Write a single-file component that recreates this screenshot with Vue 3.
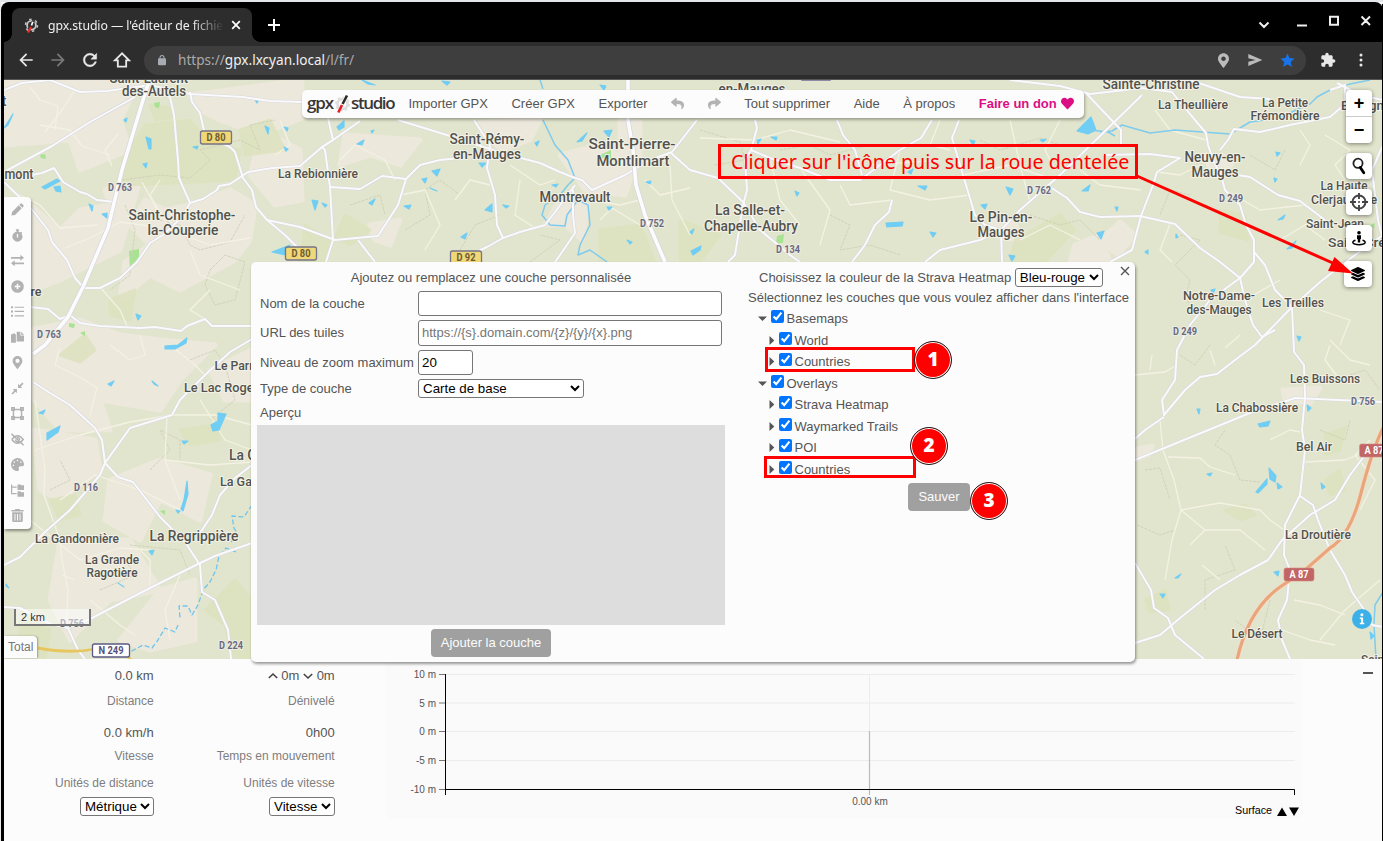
<script setup>
const p = s => 'M' + s.trim().split(/\s+/).join('L')

const roads = [
  '4,90 22,83 50,80 80,92 107,91 150,85 190,94 243,97 270,101 302,102',
  '135,97 90,122 52,146 4,172',
  '160,92 170,97 174,115 178,160 179,178 190,203',
  '190,92 192,102 200,113 205,135 230,147 235,152 243,178 252,190 256,207 267,220 285,235 300,250',
  '190,203 203,199 217,190 219,186 230,184 248,172 272,168 300,166 322,147 333,140 360,121',
  '190,203 181,218 163,235 150,243 137,262 120,278 100,288 83,288',
  '32,175 42,173 54,168 63,182 80,192 87,194 97,200 115,202',
  '4,182 30,207 48,230 52,242 67,260 75,278 83,287',
  '30,307 48,309 60,319 70,315 80,323 100,326 140,328 155,327 181,331 187,326 205,319 212,326 252,326',
  '267,220 300,227 335,240 378,236 398,205 406,179 420,165 440,160 460,158',
  '328,118 333,140 322,147 325,150 330,187 333,240 326,262',
  '330,187 360,189 382,176 406,179', '358,240 375,262',
  '398,120 450,136 505,154 540,163 560,172 575,178 582,180 592,190 625,175 650,160 672,152 697,120',
  '474,120 490,145 487,168 495,195 497,225 503,238 487,247 455,262',
  '503,238 520,232 545,225 555,212 575,185',
  '573,190 573,215 575,233 560,255 555,262',
  '671,153 690,170 718,178 743,202 760,230 790,255 800,262',
  '755,120 757,128 751,150 770,158 800,168 830,180 860,180 900,150 921,138 932,120',
  '751,150 745,160 747,190 743,205 735,255 728,262',
  '837,120 843,135 855,150 862,175',
  '959,120 952,138 963,175 975,215 985,225 1001,230 1002,262',
  '892,200 889,212 875,225 865,245 852,262',
  '1142,95 1060,175 1020,210 1001,230 980,240 940,250 925,262',
  '1047,185 1067,198 1080,212 1100,217 1140,216 1175,224 1200,248 1220,262 1240,278 1245,300 1253,325 1262,337 1275,330',
  '1085,92 1102,110 1121,130 1121,145',
  '1010,80 1060,86 1090,94 1142,88 1172,92 1180,102 1195,120 1206,133 1208,145 1215,165 1220,172 1225,190 1240,205 1246,225 1254,240 1254,262 1240,278 1210,300 1190,325 1177,350 1175,380 1162,400 1164,415 1185,390 1200,377 1217,374 1235,360 1255,345 1292,307',
  '1190,80 1240,97 1270,99', '1220,150 1228,140 1234,129 1260,132 1290,125 1330,117 1345,104 1345,85 1330,90',
  '1103,155 1150,154 1180,158 1157,172 1153,185 1141,216 1132,250 1110,262',
  '1225,173 1250,177 1278,195 1300,201 1325,220',
  '1254,252 1265,265 1275,290 1292,307 1320,282 1355,255 1383,235',
  '1292,307 1294,352 1304,365 1305,397 1302,430 1305,450 1300,495 1285,525 1284,555 1290,570 1287,600 1278,620 1282,640 1290,659',
  '1164,417 1145,430 1135,439', '1135,460 1250,413 1295,398 1383,402',
  '1300,496 1313,505 1318,520 1330,550 1345,575 1352,592 1363,608 1372,625',
  '1365,455 1350,475 1335,500 1310,515 1282,540 1268,560 1240,575 1215,590 1180,618 1160,635 1135,643',
  '1135,563 1151,590 1154,608 1168,618 1175,635 1204,659',
  '33,382 50,393 70,405 95,428 102,440 105,463 118,477 133,482 160,517 185,542 200,565 202,592 215,600 228,630 231,659',
  '4,565 20,557 45,532 70,510 100,475 105,463 130,428 172,415 180,400 205,375 230,352 252,339',
  '200,533 212,515 220,495 235,478 252,465',
  '4,607 20,608 50,624 68,628 78,650 85,659', '68,628 90,619 150,588 196,565 215,556 252,543',
  '1372,625 1383,627', '1337,83 1360,95 1383,100', '1383,145 1372,170 1378,220 1383,240'
].map(p)
const mainRoads = [
  '150,80 147,87 140,110 122,170 108,228 83,287 68,317 45,345 33,354',
  '628,80 628,120 633,150 636,185 645,215 665,262'
].map(p)
const lanes = [
  '30,87 40,100 58,106 55,130', '75,90 62,110 45,132', '40,125 70,130 82,146 110,155', '118,134 105,150 112,166',
  '65,248 90,238 120,222 150,226', '10,190 40,205 60,228 98,225', '100,287 120,310 127,326', '160,180 150,195 170,230 210,245 250,238',
  '190,250 200,275 240,290', '142,182 160,215 175,225', '210,290 190,310 205,319', '35,450 80,435 130,422 172,415 215,415 252,425',
  '60,348 55,365 85,380 97,388 90,415', '35,400 45,470 44,495 60,540 62,560', '110,345 130,360 145,355 140,335', '170,345 195,365 205,375',
  '60,500 95,475 140,490 185,512', '167,415 165,460 180,500', '200,400 225,440 252,450', '165,460 210,465 252,462', '30,520 80,560 120,548 150,550',
  '62,560 68,590 66,628', '62,575 75,580', '90,600 120,625 135,635', '150,588 150,560 140,550', '180,575 165,610 170,640',
  '280,120 290,145 275,155', '340,160 355,145 385,160 395,180', '400,195 425,190 440,225 425,250', '455,200 470,180 490,185',
  '510,165 540,185 555,180', '520,180 515,215 535,228', '590,200 620,205 640,200', '600,220 612,208 640,225', '645,180 660,195 690,188',
  '670,165 672,200 690,235', '700,138 755,140 790,130 840,142', '770,158 780,200 800,225', '840,185 850,205 892,200', '800,168 830,210 820,245',
  '870,165 940,160', '900,150 890,190 930,200 970,195', '940,120 930,145 950,150', '963,175 1010,165 1055,180', '1010,120 1020,165 1030,202',
  '1060,120 1045,150 1055,170', '1080,170 1100,185 1141,190', '1020,240 1050,225 1080,240', '1155,110 1170,130 1206,140',
  '1157,172 1180,175 1200,165', '1170,224 1160,250 1172,262', '1225,190 1260,210 1305,205', '1300,130 1310,145 1300,165', '1325,135 1350,150 1335,165 1345,180',
  '1280,240 1305,225 1325,240', '1245,300 1280,280', '1320,310 1350,320 1340,345', '1330,340 1350,360 1370,365',
  '1135,375 1165,372 1177,365', '1152,355 1150,370', '1160,420 1163,450 1174,480 1181,510 1172,540 1165,580', '1168,457 1200,458 1210,467 1235,475',
  '1181,510 1220,503 1260,510 1270,520 1284,530', '1181,510 1205,530 1240,530 1265,550', '1270,440 1290,430 1300,432', '1305,462 1345,460 1365,452',
  '1205,530 1190,545', '1202,565 1220,580', '1294,600 1320,605 1345,615', '1380,580 1345,610 1320,640', '1282,630 1310,640 1335,645',
  '1370,440 1355,455 1375,480 1360,510', '1330,345 1325,360 1340,380', '1210,350 1215,365', '1240,335 1225,348'
].map(p)
const contours = [
  '122,180 160,175 190,178 210,160 200,150 240,140 260,150 250,125 275,120', '140,215 180,225 190,245 200,250 230,242 245,215', '125,205 135,230 130,275 110,290',
  '210,270 225,255 245,262 235,300 215,305 205,285 210,270', '405,230 430,215 425,190 440,180 460,195', '350,205 380,195 385,215', '460,250 475,225 500,215',
  '530,262 560,240 540,235', '700,130 740,142 745,160 715,165', '780,150 810,145 830,155 870,145', '830,215 850,225 840,250 870,245 900,255',
  '980,140 1000,150 1040,138 1060,145', '1030,215 1060,225 1080,220 1100,240', '1180,235 1200,240 1175,265 1190,280 1185,300 1200,310', '1285,150 1275,170 1250,155',
  '1190,195 1170,190 1160,215', '1210,345 1195,365 1180,355', '1145,470 1160,468 1170,500', '1225,430 1215,445 1230,455 1240,480 1260,482', '1137,525 1160,535 1175,530',
  '1205,610 1205,580 1235,570 1225,545', '1320,430 1345,440 1350,420', '1335,380 1365,370 1380,390', '1270,600 1260,640 1235,620', '150,470 170,450 160,430 180,440 180,460',
  '190,360 215,350 225,365 235,400 210,420', '50,490 70,480 60,460', '130,545 180,550 190,575', '100,590 135,575 125,560'
].map(p)
const tans = [
  'M4 80L140 80 120 120 130 150 80 170 70 140 4 145Z', 'M190 95L302 80 302 118 260 135 220 120 200 110Z', 'M4 200L30 205 60 230 80 210 110 205 105 190 140 180 120 250 60 280 34 290Z',
  'M145 200L165 210 190 205 230 190 255 205 250 240 235 260 180 290 150 275 120 300 125 262 150 245 130 225Z', 'M262 130L300 150 302 200 275 205 250 175Z',
  'M30 330L80 320 120 335 160 340 215 345 180 380 160 410 100 400 110 430 60 430 34 400Z', 'M34 430L95 440 100 470 60 500 40 490Z', 'M110 480L160 460 210 475 200 520 160 500 140 540 105 520Z',
  'M60 540L130 540 160 590 110 600 70 640 50 600Z', 'M160 590L195 580 195 640 150 650 120 640Z', 'M210 370L252 350 252 400 225 400Z', 'M345 135L420 140 400 165 370 155 340 165Z', 'M480 122L540 120 530 140 500 150Z',
  'M560 155L600 145 635 165 625 195 585 190Z', 'M560 200L588 205 582 240 565 225 545 225Z', 'M370 225L400 220 390 245 375 240Z', 'M1100 240L1120 222 1135 235 1118 255Z', 'M990 220L1015 222 1020 240 1000 238Z',
  'M1283 390L1320 388 1310 403 1285 400Z', 'M1205 155L1235 158 1225 175 1210 170Z', 'M1135 450L1152 446 1148 455 1135 460Z', 'M620 120L640 122 640 160 620 155Z', 'M1075 245L1100 235 1110 262 1070 262Z'
]
const greens = [
  'M145 125L190 120 205 138 240 150 235 180 180 183 125 185 122 160Z', 'M150 105L170 108 172 118 155 120Z', 'M240 130L270 120 285 150 245 155Z', 'M60 355L85 335 95 350 80 362Z',
  'M50 500L75 495 80 515 60 520Z', 'M110 300L135 290 130 320 110 315Z', 'M345 215L370 230 350 245 335 238Z', 'M305 225L330 240 325 262 300 262Z', 'M680 220L720 235 700 262 680 262Z',
  'M1015 240L1060 215 1075 230 1045 262 1010 262Z', 'M1220 210L1245 215 1248 240 1220 232Z', 'M1325 435L1345 428 1340 450 1325 455Z', 'M1325 480L1340 470 1345 490 1330 495Z',
  'M1225 510L1245 505 1255 515 1240 520Z', 'M1145 600L1165 590 1170 610 1150 612Z', 'M205 610L235 580 252 600 252 659 235 659 225 625Z', 'M180 430L215 425 220 440 190 445Z', 'M20 620L50 630 45 659 20 645Z',
  'M600 230L640 225 655 262 600 262Z', 'M460 140L475 135 480 150Z'
]
const parks = ['M129 251L139 249 139 260 130 270Z', 'M154 103L160 102 159 108 155 107Z', 'M40 155L45 154 46 159 41 158Z', 'M600 155L611 150 611 160 602 158Z', 'M777 236L784 234 783 243 776 243Z', 'M160 511L165 510 165 515Z', 'M69 323L75 324 74 328 69 327Z', 'M1370 225L1375 223 1374 229Z', 'M80 333L85 331 85 336Z']
const waters = [
  'M4 128L13 114 8 125Z', 'M146 137L151 139 151 149 149 149Z', 'M42 187L57 179 60 181 45 189Z', 'M54 187L60 186 61 192 56 191Z', 'M89 204L93 206 92 211Z', 'M102 214L107 213 107 218Z', 'M143 164L147 163 146 168Z',
  'M193 147L198 146 197 149Z', 'M265 126L269 128 268 134Z', 'M254 98L259 99 257 103Z', 'M124 120L127 118 126 122Z', 'M284 127L288 128 287 131Z', 'M284 147L288 149 286 151Z', 'M136 314L141 316 138 320Z', 'M165 346L178 345 187 338 186 343 175 349 165 349Z',
  'M47 433L60 426 58 432 47 440Z', 'M39 413L45 410 43 414Z', 'M108 384L114 381 111 386Z', 'M152 381L158 386 154 384Z', 'M211 425L218 421 218 413 226 414 219 430 213 431Z', 'M182 441L188 441 184 444Z', 'M187 481L188 494 183 511 181 509 184 500Z', 'M176 510L180 511 178 513Z',
  'M149 551L154 550 152 555Z', 'M118 583L124 587Z', 'M272 252L290 245 285 255Z', 'M337 127L344 121 344 127 339 130Z', 'M357 144L364 140 362 145Z', 'M371 131L374 130 372 133Z', 'M432 171L440 169 437 176Z', 'M422 179L427 178 425 183Z', 'M430 188L437 191 434 190Z',
  'M479 163L486 163 482 167Z', 'M485 210L492 204 492 212Z', 'M503 205L509 206 506 208Z', 'M369 203L375 199 372 205Z', 'M404 206L411 205 409 209Z', 'M312 200L318 201 315 210Z', 'M322 203L327 205 325 207Z', 'M461 237L467 233 465 239Z', 'M604 131L612 130 609 137Z', 'M577 142L587 133 582 141Z',
  'M535 143L539 141 537 146Z', 'M552 185L558 184 556 187Z', 'M607 207L612 207 609 210Z', 'M691 251L701 246 700 250 693 255Z', 'M646 182L651 181 650 184Z', 'M627 240L632 242 630 244Z', 'M690 232L694 229 692 234Z', 'M1077 131L1091 117 1096 130 1088 134Z', 'M918 186L927 186 925 190Z', 'M886 223L903 222 902 226 887 227Z',
  'M1006 187L1013 189 1010 195Z', 'M1082 191L1090 185 1088 191Z', 'M930 232L936 233 933 237Z', 'M981 205L987 204 985 209Z', 'M1009 255L1015 256 1012 261Z', 'M771 137L777 137 776 140Z', 'M757 140L761 139 758 144Z', 'M908 172L913 169 911 174Z', 'M1040 140L1046 139 1043 142Z', 'M970 140L975 141 973 145Z', 'M795 191L799 193 797 196Z', 'M1097 233L1104 231 1101 239Z',
  'M1258 424L1270 421 1268 426 1260 427Z', 'M1269 468L1276 476 1275 482 1270 479Z', 'M1256 492L1267 479 1267 484 1258 493Z', 'M1277 483L1282 487 1278 489Z', 'M1321 483L1325 487 1322 489Z', 'M1207 474L1212 473 1210 476Z', 'M1160 594L1165 594 1163 598Z', 'M1175 578L1181 574 1178 578Z', 'M1274 572L1279 571 1278 576Z', 'M1197 409L1200 409 1199 414Z', 'M1347 401L1360 401 1359 403Z', 'M1370 632L1374 636 1371 639Z',
  'M1276 152L1280 153 1277 156Z', 'M1274 178L1277 179 1275 182Z', 'M1278 220L1285 215 1283 219Z', 'M1287 249L1296 241 1292 248Z', 'M1115 207L1118 207 1117 211Z', 'M1297 336L1301 337 1299 341Z', 'M1307 405L1311 408 1308 411Z', 'M1176 234L1178 237 1176 238Z', 'M1145 252L1148 250 1148 254Z', 'M1211 290L1215 289 1213 294Z', 'M442 81L450 82 447 85Z', 'M600 85L606 86 604 90Z', 'M362 80L375 85 368 84Z', 'M6 584L9 588 6 586Z'
]
const rivers = [
  '543,120 555,145 568,160 575,178 568,185 560,195 545,205 542,215 550,225 565,226 567,215 578,200 588,205 590,225 580,245 578,255 590,250 607,262',
  '1100,132 1112,131 1122,125 1150,133 1175,130 1230,134 1250,122 1280,118 1300,108 1310,104 1317,97 1330,90 1350,84 1370,80',
  '1383,592 1375,605 1374,625 1376,659', '540,80 543,89', '1090,130 1108,132 1115,136'
].map(p)
const streams = ['252,505 244,517 232,516 234,528 238,535 231,542', '236,552 226,548 219,556 216,570 210,582 203,590 198,605 192,615 188,606 179,606 180,618', '178,625 175,632 165,628 158,640 152,648 143,645 130,652'].map(p)

const places = [
  ['Saint-Laurent-', 151, 83, 83, 15], ['des-Autels', 154, 96, 64, 14], ['mont', 19, 179, 29, 14], ['t', 4, 106, 5, 14], ['re', 36, 296, 11, 13],
  ['La Rebionnière', 318, 178, 80, 13], ['Saint-Christophe-', 182, 220, 107, 14], ['la-Couperie', 183, 235, 71, 14],
  ['Saint-Rémy-', 487, 144, 75, 14], ['en-Mauges', 487, 159, 68, 14], ['Saint-Pierre-', 632, 149, 87, 15], ['Montlimart', 633, 166, 73, 15],
  ['Montrevault', 575, 202, 71, 14], ['en-Mauges', 752, 94, 67, 14], ['La Salle-et-', 750, 215, 70, 14], ['Chapelle-Aubry', 751, 231, 94, 14],
  ['Le Pin-en-', 1001, 222, 63, 14], ['Mauges', 1001, 237, 47, 14], ['Sainte-Christine', 1151, 89, 97, 14], ['La Theullière', 1193, 109, 70, 13],
  ['La Petite', 1285, 107, 46, 13], ['Frémondière', 1285, 120, 69, 13], ['Neuvy-en-', 1215, 162, 61, 14], ['Mauges', 1215, 177, 47, 14],
  ['La Haute', 1344, 190, 47, 13], ['Clerjaudière', 1344, 204, 66, 13], ['Saint-Jean', 1335, 228, 58, 13], ['Saint-Crézin', 1366, 247, 76, 13],
  ['Bourgna', 1366, 110, 50, 13], ['Notre-Dame-', 1219, 300, 72, 13], ['des-Mauges', 1219, 314, 65, 13], ['Les Treilles', 1293, 307, 62, 13],
  ['Le Parmont', 246, 370, 63, 13], ['Le Lac Rogerie', 226, 392, 84, 13], ['La Giraudière', 270, 460, 82, 14], ['La Gazonnière', 260, 486, 80, 13],
  ['Les Buissons', 1325, 383, 70, 13], ['La Chabossière', 1257, 412, 82, 13], ['Bel Air', 1314, 451, 36, 13],
  ['La Gandonnière', 77, 543, 84, 13], ['La Regrippière', 194, 541, 89, 15], ['La Grande', 112, 564, 54, 13], ['Ragotière', 112, 577, 51, 13],
  ['La Droutière', 1318, 539, 66, 13], ['Le Désert', 1257, 638, 51, 13], ['Saint-Quentin', 1397, 664, 72, 13]
]
const roadNames = [
  ['D 763', 120, 191], ['D 763', 49, 338], ['D 752', 652, 227], ['D 134', 788, 253], ['D 762', 1039, 194], ['D 249', 1231, 202], ['D 249', 1185, 335],
  ['D 756', 1363, 405], ['D 116', 86, 491], ['D 756', 72, 627], ['D 224', 231, 649]
]
const shields = [
  ['D 80', 216, 137.5, 31, 'yellow'], ['D 80', 301, 253.5, 31, 'yellow'], ['D 92', 466, 257.5, 31, 'yellow'],
  ['N 249', 111, 650.5, 37, 'white'], ['A 87', 1374, 450.5, 29, 'red'], ['A 87', 1299, 574.5, 30, 'red']
]
const nav = ['Tout supprimer', 'Aide', 'À propos']
const share = 'M503.691 189.836L327.687 37.851C312.281 24.546 288 35.347 288 56.015v80.053C127.371 137.907 0 170.1 0 322.326c0 61.441 39.581 122.309 83.333 154.132 13.653 9.931 33.111-2.533 28.077-18.631C66.066 312.814 132.917 274.316 288 272.085V360c0 20.7 24.3 31.453 39.687 18.164l176.004-152c11.071-9.562 11.086-26.753 0-36.328z'
const heart = 'M462.3 62.6C407.5 15.9 326 24.3 275.7 76.2L256 96.5l-19.7-20.3C186.1 24.3 104.5 15.9 49.7 62.6c-62.8 53.6-66.1 149.8-9.9 207.9l193.5 199.8c12.5 12.9 32.8 12.9 45.3 0l193.5-199.8c56.3-58.1 53-154.3-9.8-207.9z'
const layers = 'M12.41 148.02l232.94 105.67c6.8 3.09 14.49 3.09 21.29 0l232.94-105.67c16.55-7.51 16.55-32.52 0-40.03L266.65 2.31a25.607 25.607 0 0 0-21.29 0L12.41 107.98c-16.55 7.51-16.55 32.53 0 40.04zm487.18 88.28l-58.09-26.33-161.64 73.27c-7.56 3.43-15.59 5.17-23.86 5.17s-16.29-1.74-23.86-5.17L70.51 209.97l-58.1 26.33c-16.55 7.5-16.55 32.5 0 40l232.94 105.59c6.8 3.08 14.49 3.08 21.29 0L499.59 276.3c16.55-7.5 16.55-32.5 0-40zm0 127.8l-57.87-26.23-161.86 73.37c-7.56 3.43-15.59 5.17-23.86 5.17s-16.29-1.74-23.86-5.17L70.29 337.87 12.41 364.1c-16.55 7.5-16.55 32.5 0 40l232.94 105.59c6.8 3.08 14.49 3.08 21.29 0L499.59 404.1c16.55-7.5 16.55-32.5 0-40z'
const pin = 'M172.268 501.67C26.97 291.031 0 269.413 0 192 0 85.961 85.961 0 192 0s192 85.961 192 192c0 77.413-26.97 99.031-172.268 309.67-9.535 13.774-29.93 13.773-39.464 0zM192 272c44.183 0 80-35.817 80-80s-35.817-80-80-80-80 35.817-80 80 35.817 80 80 80z'
/* Tool glyphs are drawn on a 16-unit grid; "f" is filled, "s" is stroked. */
const tools = [
  { f: 'M.5 15.500l.8-4.500L9.500 2.800l3.700 3.700L5 14.700zM10.300 2l1.200-1.200q1-.8 2 0l1.700 1.700q.8 1 0 2L14 5.700z' },
  { f: 'M6 .2h4v1.900H9.200v1.200a6.200 6.200 0 0 1 2.400 1.100l1-1 1.300 1.300-1 1A6.200 6.200 0 1 1 6.800 3.300V2.100H6zM7.200 6v4.500h1.600V6z' },
  { f: 'M11.500 1L16 4.700l-4.500 3.600V5.800H0V3.700h11.500zM4.500 7.800L0 11.400l4.500 3.600v-2.500H16v-2.100H4.500z' },
  { f: 'M8 .2a7.800 7.800 0 1 0 0 15.600A7.800 7.800 0 0 0 8 .2zM7 4.500h2V7h2.500v2H9v2.500H7V9H4.500V7H7z' },
  { f: 'M0 1.500h2.500V4H0zM0 6.700h2.500v2.500H0zM0 12h2.500v2.500H0zM4.500 2H16v1.500H4.500zM4.500 7.200H16v1.500H4.500zM4.500 12.500H16V14H4.500z' },
  { f: 'M0 4h2V3h3v1h1v10.500H0zM7 1h4.500v4.500H16V13H7zM12.500 1L16 4.500h-3.500z' },
  { big: pin },
  { f: 'M8.700 7.300V2.200l1.800 1.800L14 .5 15.500 2 12 5.500l1.800 1.800zM7.300 8.700v5.100L5.500 12 2 15.500.5 14 4 10.500 2.200 8.700z' },
  { s: 'M3 3h10v10H3zM1 1h3v3H1zM12 1h3v3h-3zM1 12h3v3H1zM12 12h3v3h-3z' },
  { s: 'M1 8q7-9 14 0Q8 17 1 8M.5 1L15.500 15M5.500 8a2.700 2.700 0 0 0 4 2.300M7.500 5.500A2.600 2.600 0 0 1 10.500 8.500' },
  { big: 'M204.3 5C104.9 24.4 24.8 104.3 5.2 203.4c-37 187 131.7 326.4 258.8 306.7 41.2-6.4 61.4-54.6 42.5-91.7-23.1-45.4 9.9-98.4 60.9-98.4h79.7c35.8 0 64.8-29.6 64.9-65.3C511.5 97.1 368.1-26.9 204.3 5zM96 320c-17.7 0-32-14.3-32-32s14.3-32 32-32 32 14.3 32 32-14.3 32-32 32zm32-128c-17.7 0-32-14.3-32-32s14.3-32 32-32 32 14.3 32 32-14.3 32-32 32zm128-64c-17.7 0-32-14.3-32-32s14.3-32 32-32 32 14.3 32 32-14.3 32-32 32zm128 64c-17.7 0-32-14.3-32-32s14.3-32 32-32 32 14.3 32 32-14.3 32-32 32z', square: true },
  { f: 'M0 .5h1.500V3H7v1.500H1.500V11H7v1.500H0zM8 .6h3.500l1 1H16v5.700H8zM8 9h3.500l1 1H16v5.700H8z' },
  { f: 'M5.500 0h5l.7 1.300H15.500V3H.5V1.300h4.300zM1.500 4h13v10.500q0 1.500-1.500 1.500H3q-1.500 0-1.500-1.500zM4.300 6v8h1.200V6zM7.400 6v8h1.200V6zM10.500 6v8h1.200V6z' }
]
const tree = [
  ['Basemaps', 0], ['World', 1], ['Countries', 1], ['Overlays', 0], ['Strava Heatmap', 1], ['Waymarked Trails', 1], ['POI', 1], ['Countries', 1]
]
const ticks = [['10 m', 674.5], ['5 m', 703], ['0 m', 731.5], ['-5 m', 760.5], ['-10 m', 789.5]]
</script>

<template>
  <div class="window">
    <header class="tabs">
      <div class="tab">
        <svg class="fav" viewBox="0 0 14 14"><circle cx="7" cy="6.800" r="4.100" fill="none" stroke="#c9c9c9" stroke-width="1.700" /><circle cx="7" cy="6.800" r="5.600" fill="none" stroke="#c9c9c9" stroke-width="1.400" stroke-dasharray="2.300 3.560" /><path d="M9 2.500L4.500 11" stroke="#2b2b2b" stroke-width="2.800" /><path d="M8.200 3.500L7 7" stroke="#fff" stroke-width="1.600" /><path d="M6.500 8.500L3.800 13.600" stroke="#f02b2b" stroke-width="2" /></svg>
        <span class="title">gpx.studio — l'éditeur de fichiers</span>
        <svg class="x" viewBox="0 0 10 10"><path d="M1.200 1.200l7.600 7.600M8.800 1.200L1.200 8.800" /></svg>
      </div>
      <svg class="plus" viewBox="0 0 12 12"><path d="M6 0v12M0 6h12" /></svg>
      <svg class="controls" viewBox="0 0 116 20"><path d="M3.500 12.500l4.500 4.500 4.500-4.500M41 15.500h10M74 6.800h8v8h-8zM105.500 6.500l8.500 8.500M114 6.500l-8.500 8.500" /></svg>
    </header>
    <div class="addressbar">
      <svg viewBox="0 0 24 24"><path d="M20 11H7.830l5.590-5.590L12 4l-8 8 8 8 1.410-1.410L7.830 13H20z" /></svg>
      <svg class="dim" viewBox="0 0 24 24"><path d="M12 4l-1.410 1.410L16.170 11H4v2h12.170l-5.580 5.590L12 20l8-8z" /></svg>
      <svg viewBox="0 0 24 24"><path d="M17.650 6.350C16.200 4.900 14.210 4 12 4c-4.420 0-7.990 3.580-7.990 8s3.570 8 7.990 8c3.730 0 6.840-2.550 7.730-6h-2.080c-.82 2.330-3.040 4-5.650 4-3.310 0-6-2.690-6-6s2.690-6 6-6c1.660 0 3.140.69 4.220 1.780L13 11h7V4z" stroke="#e8e8e8" stroke-width=".5" /></svg>
      <svg viewBox="0 0 24 24"><path d="M12 4L3.500 12.500H7V20h10v-7.500h3.500z" fill="none" stroke="#e8e8e8" stroke-width="2.200" /></svg>
      <div class="url">
        <svg class="lock" viewBox="0 0 16 21"><path d="M14 7h-1V5.500a5 5 0 0 0-10 0V7H2q-2 0-2 2v10q0 2 2 2h12q2 0 2-2V9q0-2-2-2zM5 7V5.500a3 3 0 0 1 6 0V7z" /></svg>
        <span class="address"><i>https://</i>gpx.lxcyan.local<i>/l/fr/</i></span>
        <svg class="a" viewBox="0 0 384 512"><path :d="pin" /></svg>
        <svg class="b" viewBox="0 0 24 24"><path d="M2 21L23 12 2 3v6.500L13 12 2 14.500z" /></svg>
        <svg class="c" viewBox="0 0 24 24"><path d="M12 17.270L18.180 21l-1.640-7.030L22 9.240l-7.190-.61L12 2 9.190 8.630 2 9.240l5.460 4.730L5.820 21z" /></svg>
      </div>
      <svg class="ext" viewBox="0 0 24 24"><path d="M20.500 11H19V7c0-1.100-.9-2-2-2h-4V3.500C13 2.120 11.880 1 10.500 1S8 2.120 8 3.500V5H4c-1.100 0-1.990.9-1.990 2v3.800H3.500c1.490 0 2.700 1.210 2.700 2.700s-1.210 2.700-2.700 2.700H2V20c0 1.100.9 2 2 2h3.800v-1.500c0-1.490 1.210-2.700 2.700-2.700 1.490 0 2.700 1.210 2.700 2.700V22H17c1.100 0 2-.9 2-2v-4h1.500c1.380 0 2.500-1.120 2.500-2.500S21.880 11 20.500 11z" /></svg>
      <svg class="dots" viewBox="0 0 4 14"><circle cx="2" cy="2" r="1.500" /><circle cx="2" cy="7" r="1.500" /><circle cx="2" cy="12" r="1.500" /></svg>
    </div>

    <main class="map">
      <svg class="canvas" viewBox="4 80 1379 579">
        <rect x="4" y="80" width="1379" height="579" fill="#e2e5cd" />
        <g fill="#ece8dc" stroke="#ece8dc" stroke-width="5" stroke-linejoin="round"><path v-for="d in tans" :key="d" :d="d" /></g>
        <g fill="#dde3be" opacity=".8" stroke="#dde3be" stroke-width="3" stroke-linejoin="round"><path v-for="d in greens" :key="d" :d="d" /></g>
        <path v-for="d in parks" :key="d" :d="d" fill="#a8e293" />
        <path v-for="d in contours" :key="d" :d="d" fill="none" stroke="#cdd0b4" stroke-width=".9" stroke-dasharray="3 1" stroke-linejoin="round" />
        <path v-for="d in lanes" :key="d" :d="d" fill="none" stroke="#f3f2e4" stroke-width="1.300" stroke-linejoin="round" />
        <path v-for="d in waters" :key="d" :d="d" fill="#70cdf4" stroke="#70cdf4" stroke-width="1.200" stroke-linejoin="round" />
        <path v-for="d in rivers" :key="d" :d="d" fill="none" stroke="#7ecbed" stroke-width="1.500" stroke-linejoin="round" />
        <path v-for="d in streams" :key="d" :d="d" fill="none" stroke="#70c4ec" stroke-width="1.300" stroke-dasharray="5 2.500" stroke-linejoin="round" />
        <path v-for="d in roads" :key="'c' + d" :d="d" fill="none" stroke="#d9d9dc" stroke-width="3.200" stroke-linejoin="round" />
        <path v-for="d in roads" :key="d" :d="d" fill="none" stroke="#fafafd" stroke-width="2" stroke-linejoin="round" />
        <path v-for="d in mainRoads" :key="'c' + d" :d="d" fill="none" stroke="#d6d6dc" stroke-width="5" stroke-linejoin="round" />
        <path v-for="d in mainRoads" :key="d" :d="d" fill="none" stroke="#fcfcff" stroke-width="3.600" stroke-linejoin="round" />
        <path d="M38 648Q70 654 95 649T131 660" fill="none" stroke="#e7c65f" stroke-width="2.800" />
        <path d="M1384 426Q1372 450 1361 493T1330 548L1305 570 1280 587Q1248 610 1237 660" fill="none" stroke="#f5dccb" stroke-width="5" />
        <path d="M1384 426Q1372 450 1361 493T1330 548L1305 570 1280 587Q1248 610 1237 660" fill="none" stroke="#e8a67a" stroke-width="3.200" />
        <rect x="801" y="76" width="30" height="5" rx="1" fill="#8c8aa5" />
        <g class="place"><text v-for="(t, i) in places" :key="i" :x="t[1]" :y="t[2]" :textLength="t[3]" lengthAdjust="spacingAndGlyphs" :font-size="t[4]">{{ t[0] }}</text></g>
        <g class="route"><text v-for="(t, i) in roadNames" :key="i" :x="t[1]" :y="t[2]" textLength="24" lengthAdjust="spacingAndGlyphs">{{ t[0] }}</text></g>
        <g v-for="(s, i) in shields" :key="i" :class="['shield', s[4]]">
          <rect :x="s[1] - s[3] / 2" :y="s[2] - 6.500" :width="s[3]" height="13" rx="2" />
          <text :x="s[1]" :y="s[2] + 3.700" :textLength="s[0].length > 4 ? 25 : 19" lengthAdjust="spacingAndGlyphs">{{ s[0] }}</text>
        </g>
      </svg>

      <nav class="menu">
        <svg class="logo" viewBox="0 0 88 20">
          <text x="0" y="15" textLength="26.500">gpx</text><text x="44" y="15" textLength="44">studio</text>
          <circle cx="35.500" cy="10" r="5" fill="none" stroke="#ddd" stroke-width="2.500" /><circle cx="35.500" cy="10" r="6.700" fill="none" stroke="#ddd" stroke-width="1.600" stroke-dasharray="2.630 2.630" />
          <path d="M40.300 1L34.500 12" stroke="#fcfcfc" stroke-width="4" /><path d="M40 1.500L35.600 10" stroke="#2f2b29" stroke-width="2.600" /><path d="M35 11L31.300 18.500" stroke="#ec1c24" stroke-width="2.600" />
        </svg>
        <span>Importer GPX</span><span>Créer GPX</span><span>Exporter</span>
        <svg class="share flip" viewBox="0 0 512 512"><path :d="share" /></svg>
        <svg class="share" viewBox="0 0 512 512"><path :d="share" /></svg>
        <span v-for="n in nav" :key="n">{{ n }}</span>
        <b>Faire un don<svg viewBox="0 0 512 512"><path :d="heart" /></svg></b>
      </nav>

      <aside class="tools">
        <svg v-for="(t, i) in tools" :key="i" :viewBox="t.big ? (t.square ? '0 0 512 512' : '-64 0 512 512') : '0 0 16 16'">
          <path :d="t.big || t.f || t.s" :class="{ line: t.s }" fill-rule="evenodd" />
        </svg>
      </aside>

      <div class="rail">
        <div class="zoom"><button>+</button><button>−</button></div>
        <button class="sq"><svg viewBox="0 0 18 18"><circle cx="8" cy="6.300" r="4.600" fill="none" stroke="#222" stroke-width="1.800" /><path d="M10.300 10.400L13.800 15.800" stroke="#000" stroke-width="2.800" stroke-linecap="round" /></svg></button>
        <button class="sq"><svg viewBox="0 0 18 18"><circle cx="9" cy="9" r="6.500" fill="none" stroke="#444" stroke-width="2" /><path d="M9 0v6M9 12v6M0 9h6M12 9h6" stroke="#444" stroke-width="1.900" /><circle cx="9" cy="9" r="1" fill="#444" /></svg></button>
        <button class="sq"><svg viewBox="0 0 18 18"><circle cx="9" cy="3.800" r="1.800" /><path d="M7 6.300h4v3.500l-.8.700v3H7.800v-3L7 9.800z" /><path d="M5.500 11.300C1 12.500 2 15.700 9 15.700s8-3.200 3.500-4.400" fill="none" stroke="#000" stroke-width="1.400" /></svg></button>
        <button class="sq wide"><svg viewBox="0 0 512 512"><path :d="layers" /></svg></button>
      </div>

      <div class="scale">2 km</div>
      <div class="total">Total</div>
      <svg class="info" viewBox="0 0 20 20"><circle cx="10" cy="10" r="10" fill="#3cb0e8" /><circle cx="9.900" cy="5.700" r="1.500" fill="#fff" /><path d="M7.800 8.500h3.300v5.200h1.200v1.500H7.800v-1.500H9v-3.700H7.800z" fill="#fff" /></svg>

      <section class="dialog">
        <div class="custom">
          <h2>Ajoutez ou remplacez une couche personnalisée</h2>
          <div class="fields">
            <label>Nom de la couche</label><input class="full" type="text">
            <label class="up">URL des tuiles</label><input class="full url-in" type="text" placeholder="https://{s}.domain.com/{z}/{y}/{x}.png">
            <label>Niveau de zoom maximum</label><input class="num" type="text" value="20">
            <label>Type de couche</label><select class="type"><option>Carte de base</option></select>
            <label>Aperçu</label>
          </div>
          <div class="preview"></div>
          <button class="action add">Ajouter la couche</button>
        </div>
        <div class="selection">
          <div class="heat">Choisissez la couleur de la Strava Heatmap&nbsp;<select><option>Bleu-rouge</option></select></div>
          <div class="hint">Sélectionnez les couches que vous voulez afficher dans l'interface</div>
          <div v-for="(r, i) in tree" :key="i" :class="['row', { child: r[1] }]">
            <svg class="caret" viewBox="0 0 9 9"><path :d="r[1] ? 'M2.500 0L7.300 4.500 2.500 9z' : 'M0 2.500h9L4.500 7z'" /></svg>
            <input type="checkbox" checked><span>{{ r[0] }}</span>
          </div>
          <button class="action save">Sauver</button>
        </div>
        <svg class="close" viewBox="0 0 10 10"><path d="M1 1l8 8M9 1L1 9" /></svg>
      </section>
    </main>

    <footer>
      <div class="stats first"><p class="v">0.0 km</p><p class="l">Distance</p><p class="v">0.0 km/h</p><p class="l">Vitesse</p><p class="l u">Unités de distance</p><select class="m"><option>Métrique</option></select></div>
      <div class="stats second">
        <p class="v"><svg viewBox="0 0 10 10"><path d="M.8 7L5 3l4.200 4" /></svg> 0m <svg viewBox="0 0 10 10"><path d="M.8 3L5 7l4.200-4" /></svg> 0m</p>
        <p class="l">Dénivelé</p><p class="v">0h00</p><p class="l">Temps en mouvement</p><p class="l u">Unités de vitesse</p><select class="s"><option>Vitesse</option></select>
      </div>
      <svg class="chart" viewBox="386 659 918 161">
        <rect x="386" y="659" width="917" height="160" rx="6" fill="#fafafa" />
        <g v-for="t in ticks" :key="t[0]">
          <path :d="`M446 ${t[1]}H1295`" stroke="#ececec" /><path :d="`M439 ${t[1]}H445`" stroke="#777" />
          <text x="436" :y="t[1] + 3.500" text-anchor="end">{{ t[0] }}</text>
        </g>
        <path d="M869.500 674V731" stroke="#ececec" /><path d="M869.500 731V795" stroke="#bbb" stroke-width="1.200" />
        <path d="M445.500 674V795M445 789.500H1294.500V795" fill="none" stroke="#000" />
        <text x="870" y="805" text-anchor="middle">0.00 km</text>
        <text x="1235" y="814" class="surface" textLength="37" lengthAdjust="spacingAndGlyphs">Surface</text>
        <path d="M1277 816L1282 807.500 1287 816zM1289 807.500H1299L1294 816z" />
      </svg>
      <i class="collapse"></i>
    </footer>

    <div class="note callout">Cliquer sur l'icône puis sur la roue dentelée</div>
    <svg class="note arrow" viewBox="0 0 240 110"><path d="M7 5L205 93" stroke="#f00" stroke-width="3" /><path d="M198 100L204.500 86 223 102.500z" fill="#f00" /></svg>
    <div class="note box one"></div><div class="note box two"></div>
    <div class="note num-badge n1">1</div><div class="note num-badge n2">2</div><div class="note num-badge n3">3</div>
  </div>
</template>

<style>
body { background: #fcfcfc; overflow: hidden; }
</style>
<style scoped>
* { box-sizing: border-box; }
.window { position: relative; width: 1383px; height: 841px; padding-top: 2px; border-left: 1px solid #e8eaec; overflow: hidden; display: flex; flex-direction: column; font-family: "Liberation Sans", Arial, sans-serif; font-size: 13px; color: #555; background: linear-gradient(#e4e7ea 0 2px, #fcfcfc 2px); }
.window::after { content: ""; position: absolute; left: 0; top: 40px; bottom: 0; width: 3px; background: #000; }
.window::before { content: ""; position: absolute; right: 0; top: 4px; bottom: 0; width: 1px; background: #000; z-index: 5; }
.tabs { height: 40px; background: #000; border-radius: 8px 8px 0 0; display: flex; flex: none; align-items: flex-end; padding-left: 11px; }
.tab { position: relative; width: 240px; height: 34px; border-radius: 8px 8px 0 0; background: #2d2d2d; display: flex; align-items: center; padding: 0 11px 0 12px; }
.tab::before, .tab::after { content: ""; position: absolute; bottom: 0; width: 8px; height: 8px; }
.tab::before { left: -8px; background: radial-gradient(circle at 0 0, #000 7.5px, #2d2d2d 8px); }
.tab::after { right: -8px; background: radial-gradient(circle at 100% 0, #000 7.5px, #2d2d2d 8px); }
.fav { width: 15px; height: 15px; }
.title { font: 12.3px "Noto Sans", sans-serif; letter-spacing: -.1px; color: #f0f0f0; margin-left: 9px; width: 176px; overflow: hidden; white-space: nowrap; -webkit-mask: linear-gradient(90deg, #000 82%, transparent); mask: linear-gradient(90deg, #000 82%, transparent); }
.x { width: 10px; height: 10px; margin-left: 7px; fill: none; stroke: #fff; stroke-width: 1.8; }
.plus { width: 12px; height: 12px; margin: 0 0 11px 16px; stroke: #fff; stroke-width: 2; }
.controls { width: 116px; height: 20px; margin: 0 11px 12px auto; fill: none; stroke: #eee; stroke-width: 2; }
.addressbar { height: 38px; flex: none; background: #2d2d2d; border-bottom: 1px solid #555; display: flex; align-items: center; padding: 0 0 1px 15px; fill: #e8e8e8; }
.addressbar > svg { width: 20px; height: 20px; margin-right: 12px; flex: none; }
.addressbar > .dim { fill: #7a7a7a; }
.url { width: 1162px; height: 29px; border-radius: 15px; background: #3e3e3e; padding: 0 10px 0 14px; display: flex; align-items: center; fill: #bbb; }
.lock { width: 8px; height: 12px; margin-right: 12px; fill: #a7acb4; }
.address { font: 13.6px/18px "Noto Sans", sans-serif; color: #f0f0f0; margin: -1px auto 0 0; }
.address i { font-style: normal; color: #aaa; }
.url .a { width: 11px; height: 15px; }
.url .b { width: 16px; height: 16px; margin-left: 18px; }
.url .c { width: 17px; height: 17px; margin-left: 16px; fill: #1a73e8; }
.addressbar > .ext { width: 16px; height: 16px; margin: 0 0 0 14px; }
.addressbar > .dots { width: 4px; height: 14px; margin: 0 0 0 23px; }
.map { position: relative; height: 579px; flex: none; margin-left: 3px; }
.canvas { display: block; width: 1379px; height: 579px; }
.place { font-family: Roboto, sans-serif; font-weight: 500; fill: #51524f; text-anchor: middle; stroke: #f4f2e6; stroke-width: 2px; paint-order: stroke; }
.route { font: bold 10.5px Roboto, sans-serif; fill: #6a6984; text-anchor: middle; stroke: #eeeee0; stroke-width: 2px; paint-order: stroke; }
.shield text { font: bold 10.5px Roboto, sans-serif; text-anchor: middle; fill: #57527a; }
.shield rect { stroke: #767488; stroke-width: 1.3; }
.yellow rect { fill: #f0d778; } .yellow text { fill: #6b5c33; }
.white rect { fill: #fff; stroke: #5c5a84; }
.red rect { fill: #c16565; stroke: #d58b82; stroke-width: .6; } .red text { fill: #fff; }
.menu { position: absolute; left: 298px; top: 10px; width: 782px; height: 28px; border-radius: 5px; background: #fcfcfc; box-shadow: 1px 2px 3px rgba(0,0,0,.3); display: flex; align-items: center; gap: 23.5px; padding-left: 5px; white-space: nowrap; padding-bottom: 1px; }
.logo { width: 88px; height: 20px; margin: 0 -10px 0 0; flex: none; }
.logo text { font: 600 17px "Open Sans", "Noto Sans", sans-serif; letter-spacing: -.6px; fill: #393635; }
.share { width: 13px; height: 13px; fill: #b3b3b3; flex: none; }
.flip { transform: scaleX(-1); }
.menu b { color: #dc0e84; display: flex; align-items: center; }
.menu b svg { width: 13px; height: 13px; fill: #dc0e84; margin-left: 4px; }
.tools { position: absolute; left: 0; top: 117px; width: 27px; height: 332px; background: #fcfcfc; border-radius: 0 4px 4px 0; box-shadow: 1px 2px 3px rgba(0,0,0,.4); display: flex; flex-direction: column; align-items: center; justify-content: space-between; padding: 6px 0 7px; }
.tools svg { width: 13px; height: 13px; fill: #b2b2b2; }
.tools .line { fill: none; stroke: #b2b2b2; stroke-width: 1.8; }
.rail { position: absolute; right: 11px; top: 10px; width: 28px; display: flex; flex-direction: column; align-items: flex-end; gap: 10px; }
.rail button { border: 0; background: #fff; width: 26px; height: 26px; padding: 0; color: #000; display: flex; align-items: center; justify-content: center; }
.zoom { border-radius: 4px; overflow: hidden; background: #ccc; box-shadow: 0 1px 4px rgba(0,0,0,.45); display: flex; flex-direction: column; gap: 1px; }
.rail .zoom button { font: bold 18px "Liberation Sans", sans-serif; }
.rail .sq { border-radius: 4px; box-shadow: 0 1px 4px rgba(0,0,0,.45); }
.sq svg { width: 18px; height: 18px; margin-top: -1px; }
.rail .wide { width: 28px; }
.wide svg { width: 14px; height: 14px; }
.scale { position: absolute; left: 10px; top: 529px; width: 77px; height: 17px; border: 2px solid #777; border-top: 0; background: rgba(255,255,255,.5); font-size: 11px; line-height: 16px; padding-left: 5px; color: #333; }
.total { position: absolute; left: 0; top: 556px; width: 33px; height: 22px; border-radius: 0 4px 0 0; background: #fcfcfc; box-shadow: 1px 0 2px rgba(0,0,0,.3); font-size: 12px; line-height: 22px; padding-left: 4px; color: #777; }
.info { position: absolute; right: 11px; top: 529px; width: 20px; height: 20px; }
.dialog { position: absolute; z-index: 2; left: 247px; top: 182px; width: 884px; height: 400px; background: #fcfcfc; border-radius: 5px; box-shadow: 1px 2px 3px rgba(0,0,0,.4); display: flex; white-space: nowrap; }
.custom { width: 480px; padding-left: 6px; display: flex; flex-direction: column; align-items: center; }
h2 { font: 13px "Liberation Sans", sans-serif; margin: 8px 6px 6px 0; height: 15px; line-height: 15px; }
.fields { align-self: stretch; display: grid; grid-template-columns: 158px 1fr; grid-template-rows: 25px 26px 25px 19px 21px; row-gap: 4px; align-items: center; padding-left: 3px; justify-items: start; }
.up { position: relative; top: -1px; }
input, select { font: 13.333px "Liberation Sans", sans-serif; margin: 0; }
.fields input { border: 1px solid #767676; border-radius: 3px; padding: 1px 3px; background: #fff; height: 25px; color: #000; }
.fields .full { width: 304px; } .fields .url-in { height: 26px; font-size: 13px; padding-bottom: 3px; }
.url-in::placeholder { color: #757575; }
.fields .num { width: 55px; }
select { height: 19px; padding: 0; background: #fff; color: #000; border: 1px solid #767676; border-radius: 3px; }
.type { width: 166px; }
.preview { width: 468px; height: 200px; background: #ddd; margin: 2px 6px 4px 0; align-self: flex-start; }
.action { border: 0; border-radius: 4px; background: #a0a0a0; color: #fcfcfc; font: 13px "Liberation Sans", sans-serif; height: 28px; padding: 0 0 1px; }
.add { width: 120px; margin-right: 6px; }
.selection { padding-left: 17px; }
.heat { padding: 4px 0 0 11px; height: 27px; display: flex; align-items: center; }
.heat select { width: 88px; }
.hint { height: 19px; line-height: 18px; }
.row { height: 21.5px; display: flex; align-items: center; padding-left: 10px; }
.child { padding-left: 20px; }
.caret { width: 9px; height: 9px; fill: #555; margin-right: 4px; }
.child .caret { margin-right: 3px; margin-left: -1px; }
.row input { width: 13px; height: 13px; margin: 0 2.5px 4px 0; }
.child input { margin-left: 0; }
.save { display: block; width: 62px; margin: 3px 0 0 160px; }
.close { position: absolute; right: 5px; top: 4px; width: 10px; height: 10px; stroke: #555; stroke-width: 1.4; }
footer { position: relative; flex: 1; display: flex; margin-left: 3px; background: #fcfcfc; }
.stats { display: flex; flex-direction: column; align-items: flex-end; text-align: right; padding-top: 9px; }
.first { width: 150px; } .second { width: 181px; margin-right: 51px; }
p { margin: 0; white-space: nowrap; height: 15px; line-height: 15px; }
.v { font-size: 13px; } .l { font-size: 12px; color: #7e7e7e; margin: 11px 0 16px; }
.l + .v + .l { margin: 9px 0 0; } .stats .u { margin: 12px 0 6px; }
.stats p { padding-right: .3px; }
.v svg { width: 10px; height: 10px; fill: none; stroke: #444; stroke-width: 1.6; vertical-align: -1px; }
.m { width: 74px; } .s { width: 66px; }
.chart { width: 918px; height: 161px; font: 10px "Liberation Sans", sans-serif; fill: #555; }
.surface { font-size: 11px; fill: #000; }
.chart > path:last-child { fill: #000; }
.collapse { margin: 13px 10px 0 auto; width: 10px; height: 2px; background: #555; }
.note { position: absolute; z-index: 4; }
.callout { left: 717px; top: 144px; width: 420px; height: 35px; border: 3px solid #f00; color: #f00; font: 400 19.65px/29px "Noto Sans", sans-serif; white-space: nowrap; padding-left: 10px; }
.arrow { left: 1129px; top: 171px; width: 240px; height: 110px; }
.box { border: 3px solid #f00; }
.one { left: 764px; top: 347px; width: 150px; height: 25px; }
.two { left: 763px; top: 456px; width: 152px; height: 22px; }
.num-badge { width: 38px; height: 38px; border-radius: 50%; border: 1.5px solid #222; box-shadow: inset 0 0 0 1px #fff; background: #f00; color: #fff; font: 900 19px/35px "Noto Sans", sans-serif; text-align: center; }
.n1 { left: 913px; top: 341px; } .n2 { left: 909px; top: 427px; } .n3 { left: 969px; top: 482px; }
</style>
